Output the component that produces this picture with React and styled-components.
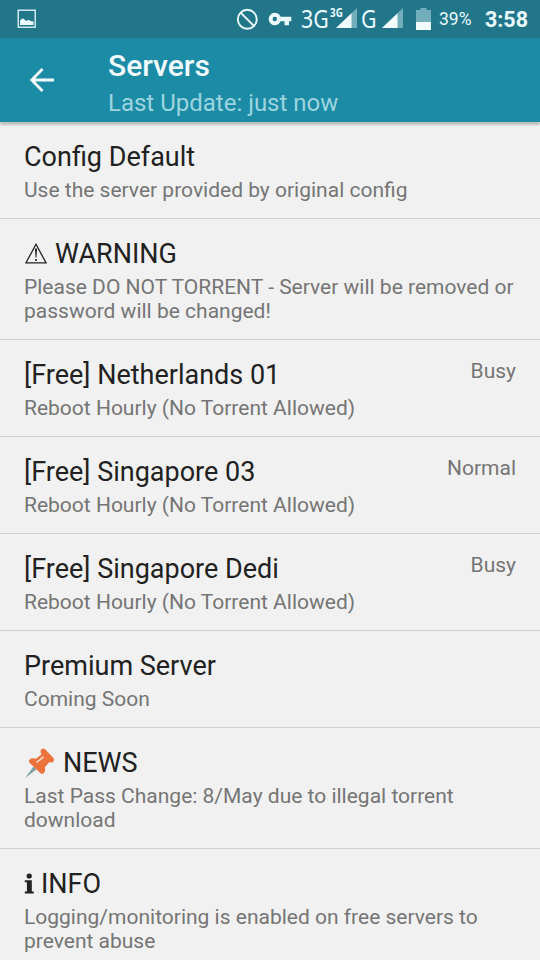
import styled, { createGlobalStyle } from 'styled-components'

const servers = [
	{
		title: 'Config Default',
		summary: ['Use the server provided by original config'],
	},
	{
		icon: 'warning',
		title: 'WARNING',
		summary: [
			'Please DO NOT TORRENT - Server will be removed or',
			'password will be changed!',
		],
	},
	{
		title: '[Free] Netherlands 01',
		summary: ['Reboot Hourly (No Torrent Allowed)'],
		status: 'Busy',
	},
	{
		title: '[Free] Singapore 03',
		summary: ['Reboot Hourly (No Torrent Allowed)'],
		status: 'Normal',
	},
	{
		title: '[Free] Singapore Dedi',
		summary: ['Reboot Hourly (No Torrent Allowed)'],
		status: 'Busy',
	},
	{
		title: 'Premium Server',
		summary: ['Coming Soon'],
	},
	{
		icon: 'pin',
		title: 'NEWS',
		summary: ['Last Pass Change: 8/May due to illegal torrent', 'download'],
	},
	{
		icon: 'info',
		title: 'INFO',
		summary: [
			'Logging/monitoring is enabled on free servers to',
			'prevent abuse',
		],
	},
]

const ImageIcon = () => (
	<svg width='20' height='20' viewBox='0 0 20 20'>
		<rect x='1.2' y='1.2' width='17' height='17' fill='none' stroke='#eafaff' strokeWidth='1.3' />
		<path d='M3 16v-4.2l1.5-1.8q1.5-1.2 3 .5l1.5 1.5 2-.9q1.5-.3 2.5.8l3 .7v3.4z' fill='#eafaff' />
	</svg>
)

const BlockedIcon = () => (
	<svg width='22' height='22' viewBox='0 0 22 22'>
		<circle cx='11.3' cy='11.3' r='9.5' fill='none' stroke='#eafaff' strokeWidth='1.9' />
		<path d='M4.6 4.6l13.4 13.4' stroke='#eafaff' strokeWidth='1.9' />
	</svg>
)

const KeyIcon = () => (
	<svg width='24' height='14' viewBox='0 0 24 14'>
		<path
			d='M12.6 4.7A6.2 6.2 0 1 0 12.6 9.3H16.5V13.3H21V9.3H23.3V4.7zM6.8 9.2a2.2 2.2 0 1 1 0-4.4 2.2 2.2 0 0 1 0 4.4z'
			fill='#eafaff'
			fillRule='evenodd'
		/>
	</svg>
)

const SignalIcon = () => (
	<svg width='21' height='20' viewBox='0 0 21 20'>
		<path d='M0 20L21 0V20z' fill='#72adbb' />
		<path d='M0 20L15.5 5.2V20z' fill='#f2fbfd' />
	</svg>
)

const BatteryIcon = () => (
	<svg width='15' height='22' viewBox='0 0 15 22'>
		<path d='M0 2h4.5V0h6v2H15v12H0z' fill='#72adbb' />
		<path d='M0 14h15v8H0z' fill='#f2fbfd' />
	</svg>
)

const BackIcon = () => (
	<svg width='24' height='24' viewBox='0 0 24 24'>
		<path d='M12.5 1L1.8 12l10.7 11M2 12h22' fill='none' stroke='#f2fbfd' strokeWidth='2.8' />
	</svg>
)

const WarningIcon = () => (
	<svg width='23' height='21' viewBox='0 0 23 21'>
		<path d='M12 1.3L22 19.8H2z' fill='none' stroke='#212121' strokeWidth='1.3' />
		<path d='M11 5.5h2l-.5 9h-1z' fill='#212121' />
		<circle cx='12' cy='17' r='1.1' fill='#212121' />
	</svg>
)

const PinIcon = () => (
	<svg width='31' height='31' viewBox='0 0 31 31'>
		<path d='M9.5 18.5l3 3L1 30z' fill='#7fa3a8' />
		<path
			d='M17.2 1.6q2.2-2 4.2-.2l7.6 8q2 2.4.2 4.4-1.4 1.3-3.8.2l-4.6 5.2q1.2 4.2-1.5 6.2-1.8 1-3.4-.7L5.8 14.9q-1.7-1.8-.4-3.2 2.3-2.4 6.4-.9l5.7-4.4q-1.8-3-.3-4.8z'
			fill='#ed733c'
		/>
		<path d='M12.5 14.5l7-5.7' stroke='#f8e2d8' strokeWidth='1.5' />
	</svg>
)

const InfoIcon = () => (
	<svg width='10' height='21' viewBox='0 0 10 21'>
		<circle cx='5.2' cy='3' r='2.6' fill='#212121' />
		<path d='M.8 7.2h7v11.3h2V20.5h-9v-2h2.1V9.2H.8z' fill='#212121' />
	</svg>
)

const icons = {
	warning: WarningIcon,
	pin: PinIcon,
	info: InfoIcon,
}

const Server = ({ icon, title, summary, status }) => {
	const Icon = icons[icon]

	return (
		<Row>
			<Details>
				<Name>
					{Icon && (
						<Glyph $name={icon}>
							<Icon />
						</Glyph>
					)}
					{title}
				</Name>
				{summary.map((line) => (
					<Summary key={line}>{line}</Summary>
				))}
			</Details>
			{status && <Status>{status}</Status>}
		</Row>
	)
}

const App = () => (
	<>
		<GlobalStyles />
		<Screen>
			<StatusBar>
				<ImageIcon />
				<Indicators>
					<BlockedIcon />
					<Key>
						<KeyIcon />
					</Key>
					<Network>
						<Carrier $width='29px'>3G</Carrier>
						<DataType>3G</DataType>
						<SignalIcon />
					</Network>
					<Network $second>
						<Carrier $width='21px'>G</Carrier>
						<SignalIcon />
					</Network>
					<BatteryIcon />
					<Percent>39%</Percent>
					<Clock>3:58</Clock>
				</Indicators>
			</StatusBar>
			<Toolbar>
				<BackButton aria-label='Back'>
					<BackIcon />
				</BackButton>
				<Heading>
					<Title>Servers</Title>
					<Subtitle>Last Update: just now</Subtitle>
				</Heading>
			</Toolbar>
			<List>
				{servers.map((server) => (
					<Server key={server.title} {...server} />
				))}
			</List>
		</Screen>
	</>
)

export default App

const GlobalStyles = createGlobalStyle`
	* {
		box-sizing: border-box;
	}

	body {
		margin: 0;
		font-family: Roboto, 'Liberation Sans', sans-serif;
		background-color: #f1f1f1;
	}

	svg {
		display: block;
		flex: none;
	}
`

const Screen = styled.div`
	width: 540px;
	height: 960px;
	overflow: hidden;
	display: flex;
	flex-direction: column;
	background-color: #f1f1f1;
`

const StatusBar = styled.div`
	flex: none;
	height: 38px;
	display: flex;
	justify-content: space-between;
	align-items: center;
	padding: 0 12px 0 17px;
	background-color: #21768a;
	color: #eafaff;
`

const Indicators = styled.div`
	width: 292px;
	height: 38px;
	display: flex;
	align-items: center;
`

const Key = styled.span`
	margin: 0 9px 0 10px;
`

const Network = styled.div`
	display: flex;
	flex: none;
	align-items: flex-end;
	height: 20px;
	margin-bottom: 2px;
	margin-left: ${({ $second }) => ($second ? '4px' : '0')};
	margin-right: ${({ $second }) => ($second ? '13px' : '0')};
`

// The network letters are drawn condensed
const Carrier = styled.span`
	width: ${({ $width }) => $width};
	font-family: 'Noto Sans', sans-serif;
	font-size: 26px;
	line-height: 20px;
	transform: scaleX(0.82);
	transform-origin: left;
`

const DataType = styled.span`
	align-self: flex-start;
	width: 13px;
	margin-right: -7px;
	font-family: 'Noto Sans', sans-serif;
	font-size: 12px;
	font-weight: 700;
	line-height: 9px;
	transform: scaleX(0.82);
	transform-origin: left;
`

const Percent = styled.span`
	padding-left: 8px;
	font-size: 17.5px;
`

const Clock = styled.span`
	margin-left: auto;
	font-size: 21.5px;
	font-weight: 700;
`

const Toolbar = styled.header`
	position: relative;
	flex: none;
	height: 84px;
	display: flex;
	background-color: #1c8ba5;
	box-shadow: 0 3px 2px rgba(0, 0, 0, 0.2);
`

const BackButton = styled.button`
	width: 108px;
	padding: 0 0 0 30px;
	border: 0;
	background: none;
`

const Heading = styled.div`
	padding-top: 9px;
`

const Title = styled.h1`
	margin: 0;
	font-size: 30px;
	font-weight: 500;
	line-height: 38px;
	color: #f2fbfd;
`

const Subtitle = styled.p`
	margin: 0;
	font-size: 24px;
	line-height: 36px;
	color: #9cd5df;
`

const List = styled.ul`
	flex: 1;
	margin: 0;
	padding: 0;
	list-style: none;
`

const Row = styled.li`
	display: flex;
	justify-content: space-between;
	padding: 18px 24px 16px;
	border-bottom: 1px solid #cfcfcf;
`

const Details = styled.div`
	white-space: nowrap;
`

const Name = styled.div`
	display: flex;
	height: 38px;
	font-size: 27px;
	line-height: 34px;
	color: #212121;
`

const Glyph = styled.span`
	width: ${({ $name }) => ({ warning: '31px', pin: '39px', info: '17px' })[$name]};
	margin-top: ${({ $name }) => ($name === 'pin' ? '2px' : '6px')};
`

const Summary = styled.div`
	font-size: 21px;
	line-height: 24px;
	color: #757575;
`

const Status = styled.span`
	font-size: 21px;
	line-height: 26px;
	color: #757575;
`
